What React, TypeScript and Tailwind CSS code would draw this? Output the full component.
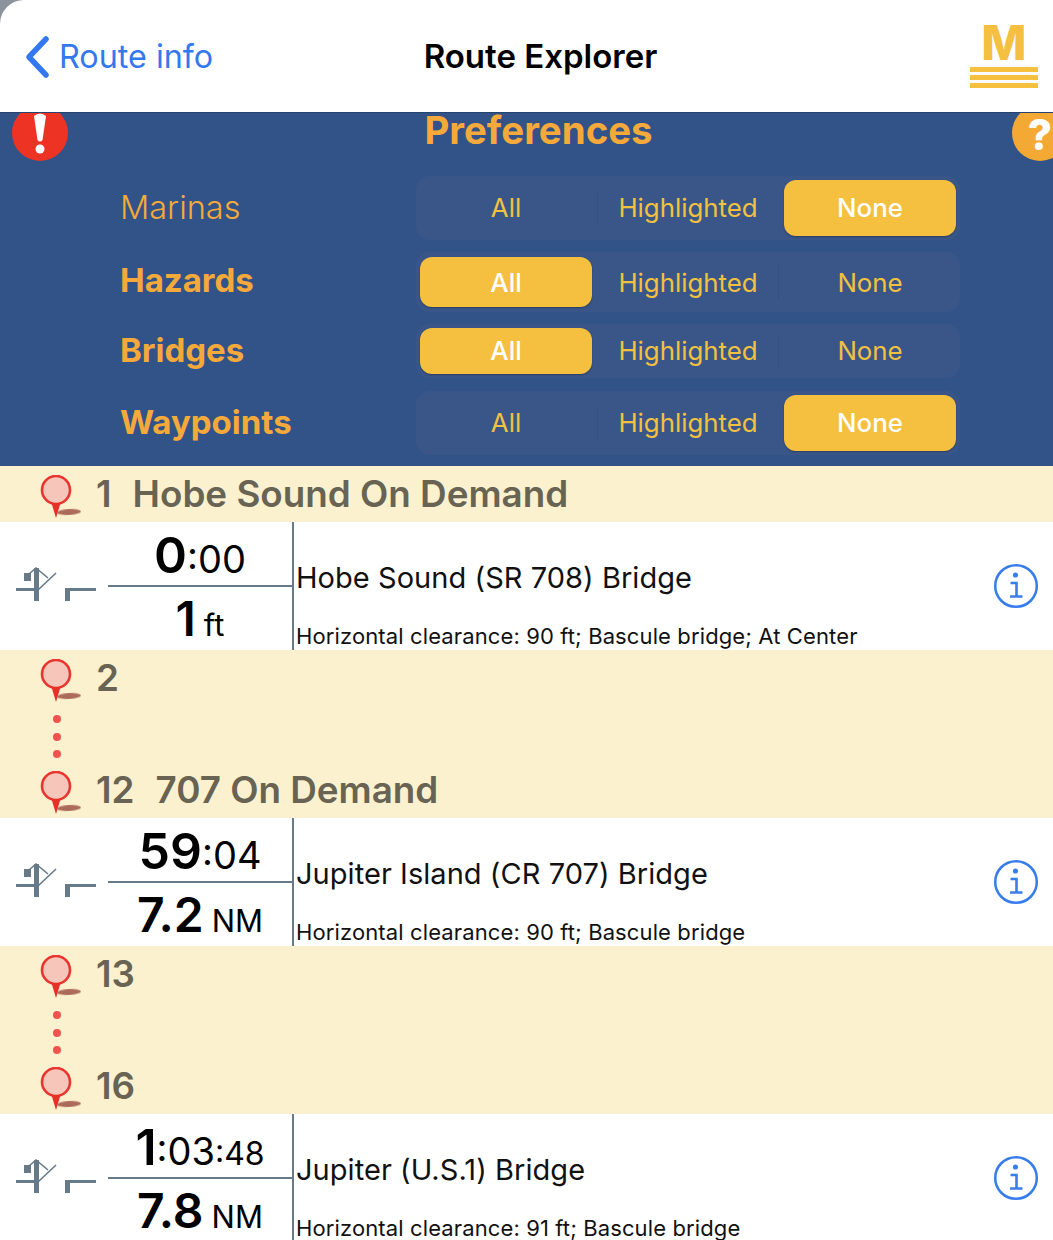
const font = "font-['Inter','Noto_Sans',sans-serif]";

type SegmentProps = { selected: number; outerH: string; innerH: string; divider: number; labelPb: string };

function Segment({ selected, outerH, innerH, divider, labelPb }: SegmentProps) {
  const labels = ["All", "Highlighted", "None"];
  const widths = ["w-[172px]", "w-[192px]", "w-[172px]"];
  return (
    <div className={`relative flex w-[544px] shrink-0 items-center rounded-[14px] bg-[#3a5689] px-1 ${outerH}`}>
      {labels.map((label, index) => (
        <div
          key={label}
          className={`flex shrink-0 items-center justify-center text-[25.8px] ${labelPb} ${widths[index]} ${
            index === selected
              ? `${innerH} rounded-[12px] bg-[#f5c03f] font-medium text-white shadow-[0_1px_2px_rgba(0,0,0,0.3)]`
              : "text-[#f2c13f]"
          }`}
        >
          {label}
        </div>
      ))}
      <div
        className="absolute top-1/2 h-[34px] w-px -translate-y-1/2 bg-[#33507f]"
        style={{ left: divider }}
      />
    </div>
  );
}

function PrefRow({
  label,
  bold,
  className,
  labelClass,
  segment,
}: {
  label: string;
  bold?: boolean;
  className: string;
  labelClass?: string;
  segment: SegmentProps;
}) {
  return (
    <div className={`flex items-center ${className}`}>
      <div
        className={`w-[416px] shrink-0 pl-[120px] text-[#f5a93a] ${labelClass ?? ""} ${
          bold ? "text-[33px] font-bold" : "text-[32.5px] font-light"
        }`}
      >
        {label}
      </div>
      <Segment {...segment} />
    </div>
  );
}

function Pin() {
  return (
    <svg width="44" height="46" viewBox="0 0 44 46" className="shrink-0">
      <ellipse cx="29" cy="37" rx="12" ry="3" fill="#9a4a3e" opacity="0.8" transform="rotate(-3 29 37)" className="blur-[0.6px]" />
      <circle cx="16" cy="15" r="14" fill="#f6c6bb" stroke="#e8352e" strokeWidth="2.6" />
      <path d="M11.5 28 L20.5 28 L16 43 Z" fill="#e8302a" />
    </svg>
  );
}

function PinLine({ num, title }: { num: string; title?: string }) {
  return (
    <div className="flex h-[56px] items-center pl-[40px]">
      <div className="mt-[8px] w-[56px]">
        <Pin />
      </div>
      <div className="text-[36.8px] font-semibold whitespace-pre text-[#686353]">
        <span>{num}</span>
        {title ? <span className="ml-[21px]">{title}</span> : null}
      </div>
    </div>
  );
}

function Dots() {
  return (
    <div className="flex h-[56px] flex-col items-start gap-[9.5px] pt-[9px] pl-[53px]">
      <div className="h-2 w-2 rounded-full bg-[#ee5350]" />
      <div className="h-2 w-2 rounded-full bg-[#ee5350]" />
      <div className="h-2 w-2 rounded-full bg-[#ee5350]" />
    </div>
  );
}

function BridgeIcon() {
  return (
    <svg width="84" height="36" viewBox="0 0 84 36" className="shrink-0">
      <g fill="#667a89">
        <rect x="0" y="22" width="20" height="3" />
        <rect x="18" y="2" width="5" height="33" />
        <rect x="8" y="7" width="7" height="8" />
        <rect x="49" y="22" width="31" height="3" />
        <rect x="49" y="22" width="5" height="13" />
      </g>
      <path d="M13 8 L20 2 L32 12 M22 24 L40 7" fill="none" stroke="#667a89" strokeWidth="1.6" />
    </svg>
  );
}

function InfoIcon() {
  return (
    <svg width="50" height="50" viewBox="0 0 50 50" className="shrink-0">
      <circle cx="25" cy="25" r="20.8" fill="none" stroke="#3a7eea" strokeWidth="2.6" />
      <circle cx="24.5" cy="14" r="2.6" fill="#3a7eea" />
      <path d="M19.5 22 H25.5 V35.5 M19 35.5 H31.5" fill="none" stroke="#3a7eea" strokeWidth="2.6" />
    </svg>
  );
}

function Row({
  time,
  dist,
  title,
  sub,
}: {
  time: React.ReactNode;
  dist: React.ReactNode;
  title: string;
  sub: string;
}) {
  return (
    <div className="flex h-[128px] bg-white">
      <div className="w-[108px] shrink-0 pt-[44px] pl-[16px]">
        <BridgeIcon />
      </div>
      <div className="flex w-[184px] shrink-0 flex-col text-black">
        <div className="flex h-[63px] items-center justify-center pt-[3px] text-center">
          <div className="text-[38px] leading-none whitespace-nowrap">{time}</div>
        </div>
        <div className="h-[2px] bg-[#667a89]" />
        <div className="flex h-[63px] items-center justify-center text-center">
          <div className="text-[31px] leading-none whitespace-nowrap">{dist}</div>
        </div>
      </div>
      <div className="w-[2px] shrink-0 bg-[#667a89]" />
      <div className="flex min-w-0 flex-1 flex-col pl-[2px]">
        <div className="mt-[38px] text-[29px] leading-[36px] tracking-[0.05px] text-[#111]">{title}</div>
        <div className="mt-[28px] text-[22px] leading-[24px] tracking-[0.12px] text-[#111]">{sub}</div>
      </div>
      <div className="flex w-[62px] shrink-0 items-center">
        <InfoIcon />
      </div>
    </div>
  );
}

const bigTime = "text-[50px] font-semibold";
const bigDist = "text-[48px] font-semibold";

export default function App() {
  return (
    <div className={`h-[1240px] w-[1053px] overflow-hidden bg-[#8d939c] ${font}`}>
      <header className="relative z-10 flex h-[113px] items-center rounded-tl-[24px] border-b border-[#26426f] bg-white pt-[2px]">
        <svg width="30" height="46" viewBox="0 0 30 46" className="ml-[22px] shrink-0">
          <path d="M24 5 L7 23 L24 41" fill="none" stroke="#3478f0" strokeWidth="5.5" strokeLinecap="round" strokeLinejoin="round" />
        </svg>
        <div className="mt-[1px] ml-[7px] text-[32.3px] text-[#3478f0]">Route info</div>
        <div className="absolute left-0 -mt-[1px] w-full pl-[28px] text-center text-[33px] font-semibold text-black">
          Route Explorer
        </div>
        <div className="absolute top-[25px] left-[970px] flex w-[68px] flex-col items-center">
          <div className="h-[35px] text-[48px] leading-[35px] font-extrabold text-[#f5c03f]">M</div>
          <div className="mt-[7px] h-[5px] w-full bg-[#f5c03f]" />
          <div className="mt-[3px] h-[5px] w-full bg-[#f5c03f]" />
          <div className="mt-[3px] h-[5px] w-full bg-[#f5c03f]" />
        </div>
      </header>

      <section className="relative -mt-px h-[354px] bg-[#325387]">
        <div className="absolute -top-[7px] left-[12px] flex h-[56px] w-[56px] items-center justify-center rounded-full bg-[#ec3324]">
          <svg width="14" height="44" viewBox="0 0 14 44" className="mt-[2px]">
            <path d="M1 4 Q7 -1 13 4 L9.5 28 Q7 31 4.5 28 Z" fill="white" />
            <circle cx="7" cy="37" r="4.5" fill="white" />
          </svg>
        </div>
        <div className="absolute -top-[7px] left-[1012px] flex h-[56px] w-[56px] items-center justify-center rounded-full bg-[#f4a935] pt-[4px] text-[42px] leading-none font-extrabold text-white">
          ?
        </div>
        <div className="h-[38px] pl-[24px] text-center text-[38.4px] leading-[36px] font-bold text-[#f5a93a]">
          Preferences
        </div>
        <PrefRow
          label="Marinas"
          className="mt-[26px] h-[64px]"
          segment={{ selected: 2, outerH: "h-[64px]", innerH: "h-[56px]", divider: 181, labelPb: "pb-0" }}
        />
        <PrefRow
          label="Hazards"
          bold
          labelClass="pb-[2px]"
          className="mt-[12px] h-[60px]"
          segment={{ selected: 0, outerH: "h-[60px]", innerH: "h-[50px]", divider: 362, labelPb: "pt-[2px]" }}
        />
        <PrefRow
          label="Bridges"
          bold
          className="mt-[12px] h-[54px]"
          segment={{ selected: 0, outerH: "h-[54px]", innerH: "h-[46px]", divider: 362, labelPb: "pb-0" }}
        />
        <PrefRow
          label="Waypoints"
          bold
          className="mt-[13px] h-[64px]"
          segment={{ selected: 2, outerH: "h-[64px]", innerH: "h-[56px]", divider: 181, labelPb: "pb-0" }}
        />
      </section>

      <div className="bg-[#fbf1cf]">
        <PinLine num="1" title="Hobe Sound On Demand" />
      </div>
      <Row
        time={<><span className={bigTime}>0</span><span>:00</span></>}
        dist={<><span className={bigDist}>1</span><span className="ml-2">ft</span></>}
        title="Hobe Sound (SR 708) Bridge"
        sub="Horizontal clearance: 90 ft; Bascule bridge; At Center"
      />
      <div className="bg-[#fbf1cf]">
        <PinLine num="2" />
        <Dots />
        <PinLine num="12" title="707 On Demand" />
      </div>
      <Row
        time={<><span className={bigTime}>59</span><span>:04</span></>}
        dist={<><span className={bigDist}>7.2</span><span className="ml-2">NM</span></>}
        title="Jupiter Island (CR 707) Bridge"
        sub="Horizontal clearance: 90 ft; Bascule bridge"
      />
      <div className="bg-[#fbf1cf]">
        <PinLine num="13" />
        <Dots />
        <PinLine num="16" />
      </div>
      <Row
        time={<><span className={bigTime}>1</span><span>:03</span><span className="text-[32px]">:48</span></>}
        dist={<><span className={bigDist}>7.8</span><span className="ml-2">NM</span></>}
        title="Jupiter (U.S.1) Bridge"
        sub="Horizontal clearance: 91 ft; Bascule bridge"
      />
    </div>
  );
}
